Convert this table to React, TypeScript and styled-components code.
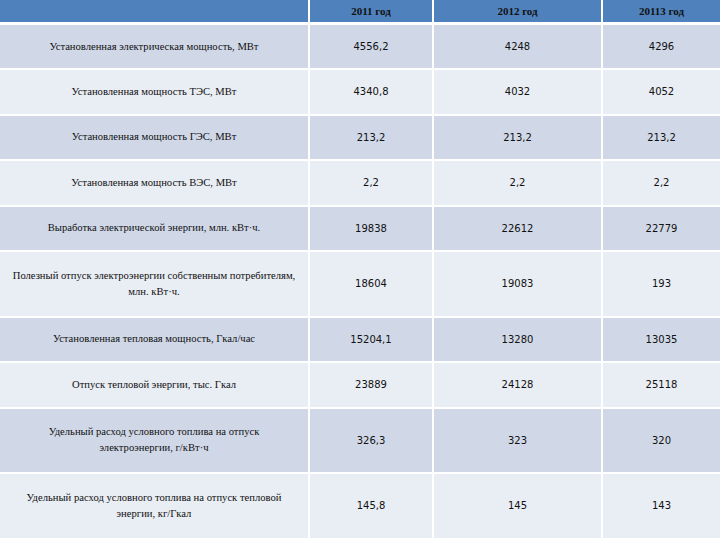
import React from "react";
import styled, { createGlobalStyle } from "styled-components";

const GlobalStyle = createGlobalStyle`
  html, body {
    margin: 0;
    padding: 0;
    background: #ffffff;
  }
`;

type Row = {
  label: React.ReactNode;
  values: string[];
  tall?: boolean;
};

const years = ["2011 год", "2012 год", "20113 год"];
const colWidths = [309, 124, 169, 118];

const rows: Row[] = [
  { label: "Установленная электрическая мощность, МВт", values: ["4556,2", "4248", "4296"] },
  { label: "Установленная мощность ТЭС, МВт", values: ["4340,8", "4032", "4052"] },
  { label: "Установленная мощность ГЭС, МВт", values: ["213,2", "213,2", "213,2"] },
  { label: "Установленная мощность ВЭС, МВт", values: ["2,2", "2,2", "2,2"] },
  { label: "Выработка электрической энергии, млн. кВт·ч.", values: ["19838", "22612", "22779"] },
  {
    label: (
      <>
        Полезный отпуск электроэнергии собственным потребителям,
        <br />
        млн. кВт·ч.
      </>
    ),
    values: ["18604", "19083", "193"],
    tall: true,
  },
  { label: "Установленная тепловая мощность, Гкал/час", values: ["15204,1", "13280", "13035"] },
  { label: "Отпуск тепловой энергии, тыс. Гкал", values: ["23889", "24128", "25118"] },
  {
    label: (
      <>
        Удельный расход условного топлива на отпуск
        <br />
        электроэнергии, г/кВт·ч
      </>
    ),
    values: ["326,3", "323", "320"],
    tall: true,
  },
  {
    label: (
      <>
        Удельный расход условного топлива на отпуск тепловой
        <br />
        энергии, кг/Гкал
      </>
    ),
    values: ["145,8", "145", "143"],
    tall: true,
  },
];

const Page = styled.div`
  width: 720px;
  height: 540px;
  overflow: hidden;
  background: #e9edf4;
`;

const Table = styled.table`
  width: 720px;
  border-collapse: collapse;
  table-layout: fixed;
`;

const Col = styled.col<{ $w: number }>`
  width: ${(p) => p.$w}px;
`;

const HeadCell = styled.th`
  height: 22px;
  padding: 0;
  background: #4f81bd;
  border: 2px solid #ffffff;
  border-top: none;
  border-bottom-width: 3px;
  font-family: "Liberation Serif", serif;
  font-size: 11px;
  font-weight: bold;
  color: #111111;
  text-align: center;
  vertical-align: middle;

  &:first-child {
    border-left: none;
  }
  &:last-child {
    border-right: none;
  }
`;

const BodyRow = styled.tr<{ $tall?: boolean; $shade: boolean }>`
  height: ${(p) => (p.$tall ? "65.5px" : "45.5px")};
  background: ${(p) => (p.$shade ? "#d0d8e8" : "#e9edf4")};
`;

const LabelCell = styled.td`
  padding: 0 3px;
  border: 2px solid #ffffff;
  border-left: none;
  font-family: "Liberation Serif", serif;
  font-size: 10.6px;
  line-height: 16px;
  color: #111111;
  text-align: center;
  vertical-align: middle;
`;

const ValueCell = styled.td`
  padding: 0;
  border: 2px solid #ffffff;
  font-family: "DejaVu Sans", sans-serif;
  font-size: 10px;
  color: #111111;
  text-align: center;
  vertical-align: middle;

  &:last-child {
    border-right: none;
  }
`;

export default function App() {
  return (
    <Page>
      <GlobalStyle />
      <Table>
        <colgroup>
          {colWidths.map((w, i) => (
            <Col key={i} $w={w} />
          ))}
        </colgroup>
        <thead>
          <tr>
            <HeadCell />
            {years.map((y) => (
              <HeadCell key={y}>{y}</HeadCell>
            ))}
          </tr>
        </thead>
        <tbody>
          {rows.map((r, i) => (
            <BodyRow key={i} $tall={r.tall} $shade={i % 2 === 0}>
              <LabelCell>{r.label}</LabelCell>
              {r.values.map((v, j) => (
                <ValueCell key={j}>{v}</ValueCell>
              ))}
            </BodyRow>
          ))}
        </tbody>
      </Table>
    </Page>
  );
}
